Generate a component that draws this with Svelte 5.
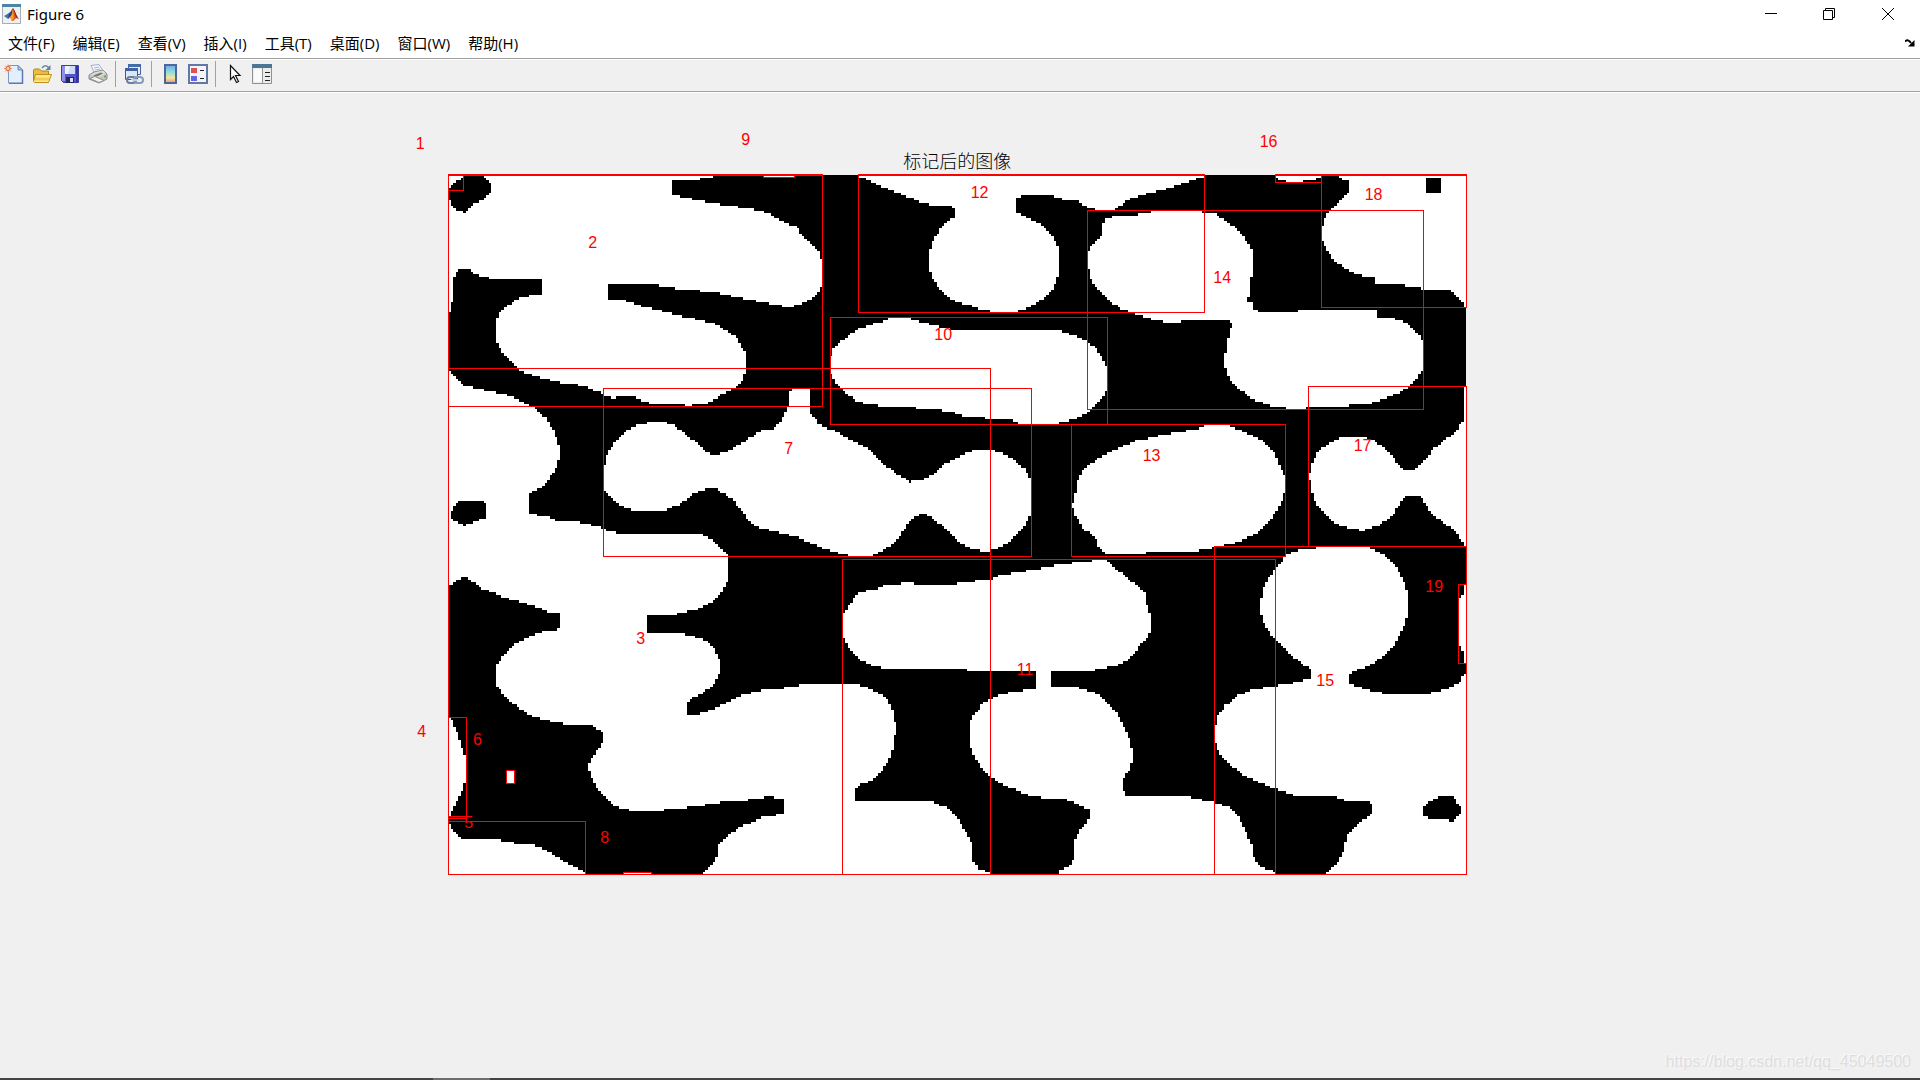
<script>
	const menus = ['文件(F)', '编辑(E)', '查看(V)', '插入(I)', '工具(T)', '桌面(D)', '窗口(W)', '帮助(H)'];

	// The label image is 400 x 275 pixels, drawn on a 3055 x 2100 axes area
	const WIDTH = 3055;
	const HEIGHT = 2100;
	const COLS = 400;
	const ROWS = 275;
	const CELL_W = WIDTH / COLS;
	const CELL_H = HEIGHT / ROWS;

	// Outlines of the white regions, each with its own origin
	const regions = [
		{ at: [-145, -165], points: '145,165 939,165 939,173 885,178 816,180 816,224 850,232 880,238 925,247 978,255 1017,261 1062,268 1107,281 1137,298 1168,312 1190,322 1215,355 1245,383 1260,400 1267,430 1267,490 1260,512 1237,534 1207,552 1175,560 1137,558 1100,549 1068,543 1032,536 1000,530 963,520 908,513 834,506 780,497 780,492 627,492 627,538 672,541 702,551 750,565 785,573 816,580 850,590 885,597 918,605 948,611 963,620 985,635 1008,652 1024,675 1037,700 1042,718 1037,755 1030,778 1015,800 985,815 948,835 918,850 870,858 820,852 765,852 727,842 700,828 665,828 645,835 613,828 600,818 550,798 520,793 475,787 430,775 380,760 350,742 312,705 297,680 291,665 291,600 300,582 335,548 365,533 405,525 429,522 429,477 282,477 230,465 212,448 183,448 168,458 162,475 162,545 154,548 153,575 147,578 145,578' },
		{ at: [-145, -165], points: '1092,165 1185,165 1185,173 1092,173' },
		{ at: [1115, -165], points: '32,710 40,690 60,668 85,648 110,630 145,615 192,603 207,595 267,595 300,605 350,617 400,629 717,629 735,638 770,648 800,665 825,682 848,710 862,745 862,805 850,832 825,858 800,878 770,895 717,910 600,910 573,900 510,896 435,888 375,872 297,864 177,857 110,845 75,815 45,785 34,760' },
		{ at: [1115, -165], points: '115,165 115,173 145,178 183,198 240,222 300,246 340,257 398,259 405,265 405,290 390,300 367,318 345,355 333,380 330,395 330,445 337,470 360,505 382,530 410,545 450,556 480,567 520,575 590,575 620,565 650,550 680,530 700,505 713,480 718,455 718,385 702,355 680,328 650,305 605,285 589,277 589,240 605,226 695,228 735,240 780,243 800,262 835,270 885,270 920,243 978,222 1038,207 1085,192 1130,177 1153,172 1153,165' },
		{ at: [1835, -165], points: '83,410 90,380 128,345 133,295 165,290 228,285 288,273 418,273 433,279 470,280 490,298 515,315 548,345 570,375 578,400 578,470 571,472 571,530 565,532 565,548 578,550 580,568 597,575 717,575 717,570 951,570 951,592 1005,595 1035,606 1060,625 1083,648 1090,668 1090,745 1075,770 1050,798 1015,820 985,832 930,850 868,855 868,860 732,864 680,864 640,858 585,842 545,812 515,785 503,765 497,740 497,708 503,658 510,655 515,610 508,598 455,598 363,601 363,607 333,607 280,600 235,584 185,567 150,545 120,515 98,487 90,468 83,440' },
		{ at: [1835, -165], points: '647,165 647,173 665,183 715,188 750,178 785,175 785,165' },
		{ at: [1835, -165], points: '830,165 845,178 867,182 867,218 845,237 820,265 800,285 788,320 788,360 800,390 830,428 868,452 907,466 945,473 945,491 1035,493 1035,500 1083,502 1083,510 1173,511 1190,530 1212,548 1212,558 1220,562 1220,165' },
		{ at: [-145, 555], points: '612,325 620,290 635,262 658,232 685,210 720,193 750,187 785,187 817,193 850,215 885,245 925,280 945,285 970,280 1000,265 1045,238 1085,212 1122,207 1145,180 1162,140 1170,135 1170,95 1175,86 1227,86 1230,155 1260,195 1295,208 1345,235 1410,270 1450,310 1500,348 1532,366 1570,358 1595,348 1630,315 1695,280 1727,270 1785,272 1845,298 1878,330 1893,360 1893,460 1875,495 1820,550 1790,565 1760,575 1720,568 1675,545 1635,505 1590,465 1557,463 1527,485 1500,530 1455,570 1413,590 1353,590 1300,575 1230,548 1190,530 1138,518 1080,505 1050,485 1030,458 1000,420 960,393 945,385 920,385 880,403 845,430 800,450 765,453 702,451 655,435 625,405 612,385' },
		{ at: [-145, 1155], points: '145,-575 153,-560 192,-525 250,-510 335,-492 395,-463 440,-425 465,-385 480,-340 480,-308 470,-275 440,-228 412,-210 390,-200 390,-145 400,-138 445,-130 470,-118 535,-115 600,-98 640,-83 690,-75 825,-77 908,-77 945,-55 975,-25 984,-10 984,65 970,90 935,125 885,150 835,160 833,165 741,165 741,218 835,218 885,230 925,247 950,275 962,305 962,330 953,355 935,382 890,408 864,425 864,464 900,460 960,440 1030,405 1090,390 1160,383 1215,374 1300,372 1370,372 1405,383 1450,405 1473,435 1482,460 1488,508 1482,552 1470,595 1445,632 1415,662 1385,673 1368,685 1368,722 1458,720 1497,720 1595,724 1635,740 1672,770 1700,820 1720,860 1720,900 1735,928 1770,936 1772,945 908,945 908,940 935,918 953,890 955,860 985,825 1030,797 1090,772 1152,762 1152,717 1122,717 1120,708 1093,708 1090,716 970,726 900,737 815,750 690,752 650,740 615,708 590,685 573,650 565,620 573,600 600,560 612,545 612,525 580,495 520,495 465,487 400,470 350,437 312,410 291,372 291,318 312,288 350,250 400,225 435,213 474,211 480,205 480,160 450,157 390,133 335,118 250,88 210,60 197,47 160,68 145,80' },
		{ at: [-145, 1155], points: '145,472 155,475 170,515 185,555 198,600 198,662 185,700 165,735 153,765 145,768' },
		{ at: [-145, 1155], points: '320,632 344,632 344,668 320,668' },
		{ at: [-145, 1155], points: '145,785 153,800 183,835 280,838 350,850 400,855 445,872 500,910 557,938 557,945 145,945' },
		{ at: [-145, 1155], points: '672,937 756,937 756,945 672,945' },
		{ at: [1805, 585], points: '68,400 75,390 82,340 100,300 135,272 180,248 250,215 340,195 440,177 472,165 532,165 590,188 640,215 675,250 690,290 707,325 707,365 690,405 665,445 630,485 580,510 532,525 447,542 310,546 280,550 200,556 165,550 145,530 143,508 100,475 80,440 68,412' },
		{ at: [1805, 585], points: '778,318 785,280 800,252 830,225 870,203 915,200 965,208 1005,232 1040,275 1062,299 1097,299 1130,265 1145,243 1190,205 1215,190 1235,160 1242,145 1242,50 1250,50 1250,530 1242,525 1225,492 1195,467 1145,432 1112,380 1066,379 1045,410 1020,445 985,468 940,482 905,475 868,468 830,437 800,405 785,365' },
		{ at: [1115, 1095], points: '70,225 85,200 115,158 168,148 198,137 247,130 282,130 283,135 395,133 460,124 512,117 545,105 620,92 717,75 815,62 862,60 885,85 930,118 975,160 985,215 993,220 993,270 983,290 955,325 930,355 890,378 825,388 825,393 696,393 696,440 770,440 830,460 865,488 895,525 915,565 932,600 938,632 938,662 930,690 918,700 908,725 908,750 920,765 1115,768 1115,775 1175,785 1230,803 1260,835 1282,885 1298,925 1305,965 1330,985 1365,996 1367,1006 717,1006 717,996 745,980 765,955 765,905 785,865 800,850 810,822 808,808 770,792 740,778 680,775 630,765 565,742 510,710 475,670 460,640 450,608 450,548 465,520 490,490 545,463 600,453 648,445 648,393 420,390 192,385 150,375 115,355 85,320 70,290' },
		{ at: [2075, 1095], points: '225,570 232,530 255,500 290,468 340,448 410,437 480,425 513,415 513,388 460,350 410,303 380,265 370,240 360,212 360,195 370,150 385,120 410,80 445,42 480,30 540,22 685,22 730,42 765,72 790,120 804,160 804,225 790,265 765,312 730,350 685,378 627,402 627,428 680,450 730,460 865,460 920,448 955,430 975,405 980,400 980,1006 562,1006 565,996 595,970 610,935 620,890 660,850 695,818 695,793 685,785 620,782 590,772 468,766 410,748 350,725 300,697 250,655 232,625 225,595' },
		{ at: [2075, 1095], points: '957,195 963,165 972,160 972,135 980,135 980,370 972,370 972,340 963,330 957,300' }
	];

	// Black holes inside the white regions
	const holes = [
		{ at: [-145, -165], points: '190,175 190,165 252,165 253,175 268,180 275,190 275,216 260,232 230,247 205,265 195,277 170,270 155,255 147,238 147,210 155,195 175,180' },
		{ at: [-145, 555], points: '168,430 185,423 245,423 261,430 261,475 235,480 195,497 170,485 153,475 153,455' },
		{ at: [1835, -165], points: '1098,174 1143,174 1143,218 1098,218' },
		{ at: [2075, 1095], points: '850,800 865,785 903,770 940,770 950,785 962,800 962,822 945,836 932,845 925,836 868,836 850,828' }
	];

	// Bounding boxes: x, y, width, height
	const boxes = [
		[0, 0, 45, 46],
		[0, 0, 1122, 694],
		[0, 580, 1626, 1519],
		[0, 1626, 55, 304],
		[0, 1924, 70, 0],
		[175, 1786, 24, 39],
		[466, 641, 1283, 504],
		[0, 1939, 412, 160],
		[527, 2092, 84, 7],
		[947, 0, 92, 7],
		[1146, 427, 831, 321],
		[1184, 1153, 1298, 946],
		[1230, 0, 1038, 412],
		[1871, 748, 642, 397],
		[1917, 106, 1008, 596],
		[2298, 1114, 756, 985],
		[2481, 0, 139, 22],
		[2581, 633, 473, 481],
		[2620, 0, 434, 397],
		[3032, 1228, 22, 238]
	];

	const labels = [
		{ n: 1, x: -97, y: -78 },
		{ n: 2, x: 421, y: 219 },
		{ n: 3, x: 565, y: 1406 },
		{ n: 4, x: -92, y: 1686 },
		{ n: 5, x: 49, y: 1958 },
		{ n: 6, x: 75, y: 1709 },
		{ n: 7, x: 1009, y: 836 },
		{ n: 8, x: 457, y: 2004 },
		{ n: 9, x: 880, y: -89 },
		{ n: 10, x: 1459, y: 495 },
		{ n: 11, x: 1706, y: 1499 },
		{ n: 12, x: 1568, y: 69 },
		{ n: 13, x: 2084, y: 858 },
		{ n: 14, x: 2296, y: 323 },
		{ n: 15, x: 2605, y: 1533 },
		{ n: 16, x: 2435, y: -84 },
		{ n: 17, x: 2717, y: 828 },
		{ n: 18, x: 2750, y: 76 },
		{ n: 19, x: 2932, y: 1251 }
	];

	/**
	 * Turn an outline into rows of whole image pixels
	 * @param {{at: number[], points: string}} shape
	 * @returns {string} path data
	 */
	function rasterize(shape) {
		const pts = shape.points.split(' ').map((p) => {
			const [x, y] = p.split(',').map(Number);
			return [x + shape.at[0], y + shape.at[1]];
		});
		let d = '';
		for (let row = 0; row < ROWS; row++) {
			const y = (row + 0.5) * CELL_H;
			const hits = [];
			for (let i = 0; i < pts.length; i++) {
				const [x1, y1] = pts[i];
				const [x2, y2] = pts[(i + 1) % pts.length];
				if (y1 <= y !== y2 <= y) {
					hits.push(x1 + ((y - y1) / (y2 - y1)) * (x2 - x1));
				}
			}
			hits.sort((a, b) => a - b);
			for (let i = 0; i + 1 < hits.length; i += 2) {
				const start = Math.round(hits[i] / CELL_W);
				const end = Math.round(hits[i + 1] / CELL_W);
				if (end <= start) continue;
				const left = (start * CELL_W).toFixed(2);
				const right = (end * CELL_W).toFixed(2);
				const top = (row * CELL_H).toFixed(2);
				const bottom = ((row + 1) * CELL_H).toFixed(2);
				d += `M${left} ${top}H${right}V${bottom}H${left}z`;
			}
		}
		return d;
	}

	const regionPath = regions.map(rasterize).join('');
	const holePath = holes.map(rasterize).join('');
</script>

<div class="window">
	<header class="titlebar">
		<svg class="app-icon" viewBox="0 0 20 20" width="20" height="20" aria-hidden="true">
			<rect x="0.5" y="0.5" width="18" height="19" fill="#eef0f2" stroke="#a7aeb4" />
			<rect x="0" y="0" width="19" height="3" fill="#4d83a3" />
			<path d="M2 12l5-3 2 2-3 4z" fill="#3a78b5" />
			<path d="M7 9c2-1 3-4 4-5l-1 7-4 4z" fill="#244a78" />
			<path d="M11 4c2 2 3 8 6 11-2-1-3-1-4 0-1 2-3 2-3 2l-2-4c2-2 2-6 3-9z" fill="#d9541e" />
			<path d="M11 4c2 2 3 8 6 11l-3-2c-1-3-2-6-3-9z" fill="#8e1f12" />
			<path d="M11 6l1 8-2 3-2-4c2-1 2-4 3-7z" fill="#f49b2a" />
		</svg>
		<h1>Figure 6</h1>
		<div class="window-buttons">
			<button aria-label="最小化">
				<svg viewBox="0 0 12 12" width="12" height="12"><path d="M0 5.5h12" /></svg>
			</button>
			<button aria-label="还原">
				<svg viewBox="0 0 12 12" width="12" height="12"><path d="M.5 2.5h9v9h-9zM2.5 2.5v-2h9v9h-2" /></svg>
			</button>
			<button aria-label="关闭">
				<svg viewBox="0 0 12 12" width="12" height="12"><path d="M0 0l12 12M12 0L0 12" /></svg>
			</button>
		</div>
	</header>

	<nav class="menubar">
		{#each menus as menu}
			<button>{menu}</button>
		{/each}
		<button class="dock" aria-label="停靠">
			<svg viewBox="0 0 10 8" width="10" height="8">
				<path d="M0 2.5C2 .5 4 1 6 4" fill="none" stroke="#000" stroke-width="2" />
				<path d="M9.500 1v6.500H3z" />
			</svg>
		</button>
	</nav>

	<div class="toolbar" role="toolbar">
		<button aria-label="新建图窗">
			<svg viewBox="0 0 20 20" width="20" height="20">
				<path d="M4.500 1.500H14l4.500 4.500v13h-14z" fill="#e3effc" stroke="#7d97cc" />
				<path d="M18.500 6v13.500H5" fill="none" stroke="#5f78b5" stroke-width="1.500" />
				<path d="M14 1.500V6h4.500z" fill="#a9c0e8" stroke="#6d88c0" />
				<path d="M4 .5v8M0 4.500h8M1 1.500l6 6M7 1.500l-6 6" stroke="#e9926d" />
				<circle cx="4" cy="4.500" r="2" fill="#ffdf92" stroke="#da5930" />
			</svg>
		</button>
		<button aria-label="打开文件">
			<svg viewBox="0 0 20 20" width="20" height="20">
				<path d="M1.500 17V6l1-1h5l2 2h7v10z" fill="#e9bd3e" stroke="#b58518" />
				<path d="M3.500 10.500h16l-3 8h-14l-1-1z" fill="#ffe98c" stroke="#be8f20" />
				<path d="M3 15h14" stroke="#f3cd50" stroke-width="3" />
				<path d="M10 4c2-3 5-3 7 0" fill="none" stroke="#6888a4" stroke-width="1.500" />
				<path d="M18.500 1v5h-5z" fill="#64839d" />
			</svg>
		</button>
		<button aria-label="保存图窗">
			<svg viewBox="0 0 20 20" width="20" height="20">
				<path d="M1.500 1.500h17v17h-15l-2-2z" fill="#5555c9" stroke="#3c3ca2" />
				<path d="M2 2h3v15H2z" fill="#9191ea" />
				<path d="M5 2h10v8H5z" fill="#edf2fc" />
				<path d="M10 2h5v8H8z" fill="#cfdcf5" />
				<path d="M16 2h2v16h-2z" fill="#3535a3" />
				<path d="M6 13h8v6H6z" fill="#26265d" />
				<path d="M10 14h3v4h-3z" fill="#d9def4" />
			</svg>
		</button>
		<button aria-label="打印图窗">
			<svg viewBox="0 0 20 20" width="20" height="20">
				<path d="M3 1.500l8-1 5 8-9 2z" fill="#f3f6ff" stroke="#a1adc8" />
				<path d="M6 4l5-1M7 6l5-1" stroke="#a3b4e2" />
				<path d="M1 11l5-3 9-2 4 4v5l-8 4-10-4z" fill="#c4c4c4" stroke="#8a8a8a" />
				<path d="M2 11l5-2.500 8-2 3 3-7 4z" fill="#dcdcd6" />
				<path d="M5 11.500l8-3 2 1-6 3z" fill="#77786a" />
				<path d="M2 14.500l9 4 5-2-9-4z" fill="#f4f5ee" stroke="#8d8d8d" />
				<path d="M16 12.500h2" stroke="#6aae3e" stroke-width="2" />
			</svg>
		</button>
		<span class="separator"></span>
		<button aria-label="链接绘图">
			<svg viewBox="0 0 20 20" width="20" height="20">
				<path d="M4.500 1.500h12v9h-12z" fill="#e6edf7" stroke="#44619c" />
				<path d="M4 0h13v3H4z" fill="#456aa9" />
				<path d="M1.500 5.500h12v10h-12z" fill="#dce7f5" stroke="#3e5b98" />
				<path d="M1 4h13v3H1z" fill="#3d639e" />
				<rect x="3" y="13" width="9" height="6" rx="3" fill="none" stroke="#667e9f" stroke-width="2" />
				<rect x="10" y="13" width="9" height="6" rx="3" fill="none" stroke="#849bb9" stroke-width="2" />
				<path d="M7 16h8" stroke="#dbe6f0" stroke-width="1.500" />
			</svg>
		</button>
		<span class="separator"></span>
		<button aria-label="插入颜色栏">
			<svg viewBox="0 0 20 20" width="20" height="20">
				<defs>
					<linearGradient id="colorbar" x1="0" y1="0" x2="0" y2="1">
						<stop offset="0" stop-color="#74a5ed" />
						<stop offset=".4" stop-color="#8edfdc" />
						<stop offset=".7" stop-color="#f2e69b" />
						<stop offset="1" stop-color="#ee9386" />
					</linearGradient>
				</defs>
				<rect x="5" y="1" width="11" height="18" fill="url(#colorbar)" stroke="#4e6797" stroke-width="2" />
			</svg>
		</button>
		<button aria-label="插入图例">
			<svg viewBox="0 0 20 20" width="20" height="20">
				<rect x="1" y="1" width="18" height="18" fill="#f4f5fb" stroke="#6177a8" stroke-width="2" />
				<path d="M3 4h6v5H3z" fill="#df5053" />
				<path d="M3 12h6v5H3z" fill="#6464e5" />
				<path d="M12 6.500h4M12 14.500h4" stroke="#222" />
			</svg>
		</button>
		<span class="separator"></span>
		<button aria-label="编辑绘图">
			<svg viewBox="0 0 20 20" width="20" height="20">
				<path d="M6.500 1.500v14l3-3 3 6 2-1-3-6h4.500z" fill="#fff" stroke="#111" stroke-width="1.200" />
			</svg>
		</button>
		<button aria-label="打开属性检查器">
			<svg viewBox="0 0 20 20" width="20" height="20">
				<path d="M.5.500h19v19H.500z" fill="#ececec" stroke="#919191" />
				<path d="M0 0h20v4H0z" fill="#4d7693" />
				<path d="M2 5h8v13H2z" fill="#fafafa" />
				<path d="M10.500 4v15" stroke="#929292" />
				<path d="M13 8.500h5M13 12.500h5M13 16.500h5" stroke="#222" stroke-width="1.200" />
			</svg>
		</button>
	</div>

	<main class="figure">
		<h2>标记后的图像</h2>
		<svg class="plot" viewBox="0 0 {WIDTH} {HEIGHT}" role="img" aria-label="标记后的图像">
			<rect class="background" width={WIDTH} height={HEIGHT} />
			<path class="region" d={regionPath} />
			<path class="hole" d={holePath} />
			{#each boxes as [x, y, width, height]}
				<path class="box" d="M{x} {y}h{width}v{height}h{-width}z" />
			{/each}
			{#each labels as label}
				<text x={label.x} y={label.y}>{label.n}</text>
			{/each}
		</svg>
		<p class="watermark">https://blog.csdn.net/qq_45049500</p>
	</main>

	<footer class="taskbar"><span></span></footer>
</div>

<style>
	:global(body) {
		margin: 0;
	}

	.window {
		display: flex;
		flex-direction: column;
		min-height: 100vh;
		background: #f0f0f0;
		color: #000;
		font-family: "Noto Sans", "Noto Sans CJK SC", sans-serif;
	}

	button {
		padding: 0;
		border: none;
		background: none;
		color: inherit;
		font: inherit;
	}

	svg {
		display: block;
	}

	.titlebar {
		display: flex;
		align-items: center;
		height: 28px;
		padding: 0 4px 0 2px;
		background: #fff;
	}

	.titlebar h1 {
		margin: 0 0 0 5px;
		font-size: 15px;
		font-weight: 400;
		line-height: 20px;
	}

	.window-buttons {
		display: flex;
		margin-left: auto;
		height: 28px;
	}

	.window-buttons button {
		display: flex;
		align-items: center;
		justify-content: center;
		width: 58px;
	}

	.window-buttons button:last-child {
		padding-left: 2px;
	}

	.window-buttons path {
		fill: none;
		stroke: #000;
	}

	.menubar {
		display: flex;
		align-items: center;
		gap: 18px;
		height: 30px;
		padding: 0 5px 0 8px;
		border-bottom: 1px solid #a0a0a0;
		background: #fff;
		font-family: "Open Sans", "Noto Sans CJK SC", sans-serif;
		font-size: 15px;
		line-height: 22px;
	}

	.menubar .dock {
		margin-left: auto;
	}

	.toolbar {
		display: flex;
		align-items: center;
		height: 28px;
		padding-bottom: 3px;
		border-top: 1px solid #fff;
		border-bottom: 1px solid #a0a0a0;
	}

	.toolbar button {
		display: flex;
		justify-content: center;
		width: 28px;
	}

	.separator {
		width: 1px;
		height: 26px;
		margin: 0 4px 0 3px;
		background: #a0a0a0;
	}

	.figure {
		flex: 1;
		display: flex;
		flex-direction: column;
		padding-top: 55px;
		border-top: 1px solid #fff;
	}

	.figure h2 {
		width: 53.04%;
		margin: 0 0 3px 23.34%;
		color: #000;
		font-family: "Noto Sans CJK SC", sans-serif;
		font-size: 18px;
		font-weight: 300;
		line-height: 24px;
		text-align: center;
	}

	.plot {
		width: 53.04%;
		margin-left: 23.34%;
		overflow: visible;
	}

	.region {
		fill: #fff;
		shape-rendering: crispEdges;
	}

	.background,
	.hole {
		fill: #000;
		shape-rendering: crispEdges;
	}

	.box {
		fill: none;
		stroke: #f00;
		stroke-width: 3px;
		shape-rendering: crispEdges;
	}

	.plot text {
		fill: #f00;
		font-family: "Liberation Sans", Arial, sans-serif;
		font-size: 48px;
	}

	.watermark {
		margin: auto 9px 6px auto;
		color: #dedede;
		font-family: "Liberation Sans", Arial, sans-serif;
		font-size: 16px;
		line-height: 20px;
		text-shadow: -1px -1px 0 #fafafa;
	}

	.taskbar {
		height: 2px;
		padding-left: 433px;
		background: #444;
	}

	.taskbar span {
		display: block;
		width: 57px;
		height: 2px;
		background: #6e6e6e;
	}
</style>
